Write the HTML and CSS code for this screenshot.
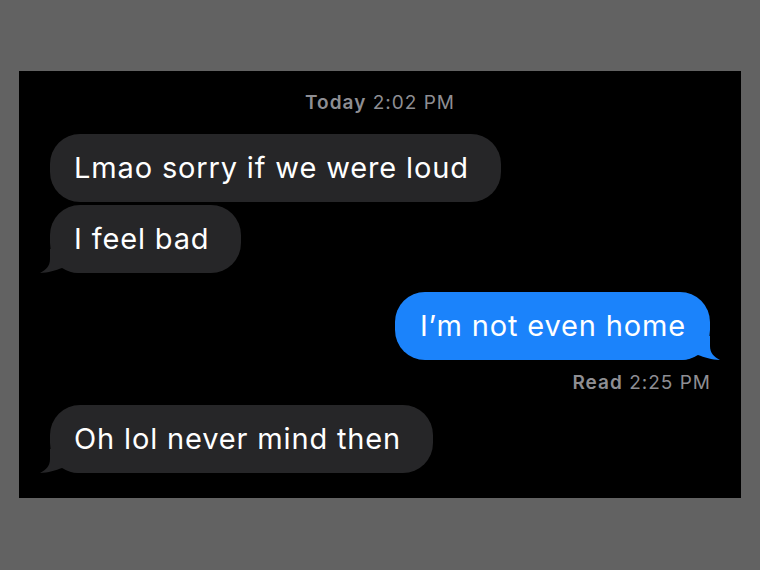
FILE: index.html
```html
<!DOCTYPE html>
<html>
<head>
<meta charset="utf-8">
<link rel="stylesheet" href="styles.css">
</head>
<body>
<div class="panel">
  <div class="stamp"><b>Today</b> 2:02 PM</div>
  <div class="row in first"><div class="bubble gray">Lmao sorry if we were loud</div></div>
  <div class="row in tight"><div class="bubble gray tailed">I feel bad<svg class="tail tail-l" viewBox="0 0 40 24" width="40" height="24"><path d="M10 0 L10 10 C10 17 6 21 0 24 C8 24 16 21 22 19 C26 21 31 24 38 24 L40 24 L40 0 Z"/></svg></div></div>
  <div class="row out"><div class="bubble blue tailed">I’m not even home<svg class="tail tail-r" viewBox="0 0 40 24" width="40" height="24"><path d="M30 0 L30 10 C30 17 34 21 40 24 C32 24 24 21 18 19 C14 21 9 24 2 24 L0 24 L0 0 Z"/></svg></div></div>
  <div class="read"><b>Read</b> 2:25 PM</div>
  <div class="row in last"><div class="bubble gray tailed">Oh lol never mind then<svg class="tail tail-l" viewBox="0 0 40 24" width="40" height="24"><path d="M10 0 L10 10 C10 17 6 21 0 24 C8 24 16 21 22 19 C26 21 31 24 38 24 L40 24 L40 0 Z"/></svg></div></div>
</div>
</body>
</html>
```
FILE: styles.css
```css
html, body {
  margin: 0;
  padding: 0;
}
body {
  background: #626262;
  width: 760px;
  height: 570px;
  overflow: hidden;
  font-family: Inter, "Liberation Sans", Arial, sans-serif;
}
.panel {
  margin: 71px 0 0 19px;
  width: 722px;
  height: 427px;
  box-sizing: border-box;
  background: #000;
  padding: 20px 31px 0 31px;
  display: flex;
  flex-direction: column;
}
.stamp, .read {
  color: #8e8e93;
  font-size: 19px;
  line-height: 24px;
  font-weight: 400;
  letter-spacing: 1px;
}
.stamp b, .read b {
  font-weight: 600;
}
.stamp {
  text-align: center;
}
.read {
  text-align: right;
  margin-top: 11px;
  margin-right: -1px;
}
.row {
  display: flex;
}
.row.out {
  justify-content: flex-end;
  margin-top: 19px;
}
.row.first {
  margin-top: 19px;
}
.row.tight {
  margin-top: 3px;
}
.row.last {
  margin-top: 10px;
}
.bubble {
  position: relative;
  height: 68px;
  line-height: 68px;
  padding: 0 32px 0 24px;
  border-radius: 30px;
  font-size: 29px;
  color: #fff;
  white-space: nowrap;
  letter-spacing: 0.85px;
}
.bubble.blue {
  background: #1b83fb;
  padding: 0 24px 0 25px;
}
.bubble.gray {
  background: #262628;
}
.tail {
  position: absolute;
  bottom: 0;
}
.tail-l {
  left: -10px;
}
.tail-r {
  right: -10px;
}
.gray .tail path {
  fill: #262628;
}
.blue .tail path {
  fill: #1b83fb;
}
```
